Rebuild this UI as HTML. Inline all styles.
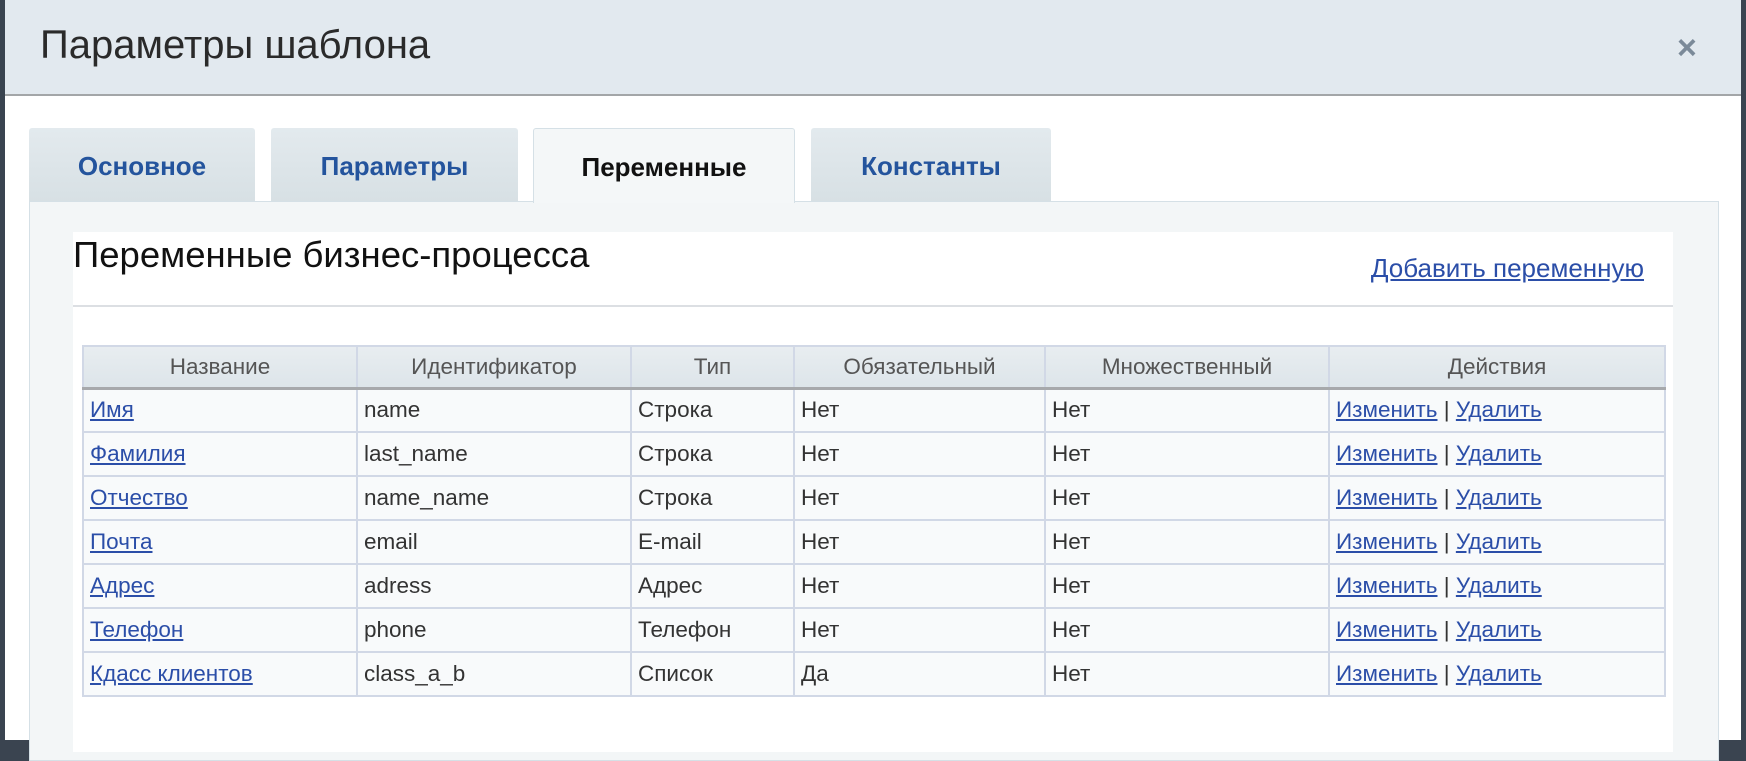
<!DOCTYPE html>
<html><head><meta charset="utf-8"><style>
*{box-sizing:border-box;margin:0;padding:0}
body{width:1746px;height:740px;overflow:hidden;background:#3a4450;font-family:"Liberation Sans",Arial,sans-serif;position:relative}
.dlg{position:absolute;left:5px;top:0;width:1736px;height:740px;background:#fff}
.hdr{position:absolute;left:0;top:0;width:1736px;height:96px;background:#e2e9ef;border-bottom:2px solid #a3a6a8}
.hdr h1{position:absolute;left:35px;top:23px;font-weight:normal;font-size:40px;color:#2a2a2a}
.x{position:absolute;left:1672px;top:29px;font-size:34px;color:#7b8a99;font-weight:bold}
.tab{position:absolute;top:128px;height:74px;background:linear-gradient(#e3eaee,#d7e0e4);border-radius:3px 3px 0 0;font-weight:bold;font-size:26px;color:#24549d;text-align:center;line-height:76px}
.tab.act{background:#f4f7f8;color:#111;border:1px solid #d5e0e6;border-bottom:none;height:75px;z-index:2}
.panel{position:absolute;left:24px;top:201px;width:1690px;height:560px;background:#f3f6f7;border:1px solid #d5e0e6}
.inner{position:absolute;left:68px;top:232px;width:1600px;height:520px;background:#fff}
.inner h2{position:absolute;left:0;top:2px;font-weight:normal;font-size:36.5px;color:#111}
.add{position:absolute;right:29px;top:21px;font-size:26px;color:#2b4ea8;text-decoration:underline}
.sep{position:absolute;left:0;top:73px;width:1600px;height:2px;background:#dcdfe3}
table{position:absolute;left:9px;top:113px;border-collapse:collapse;font-size:22.5px;background:#f8fafb}
th{height:42px;background:linear-gradient(#e8edf0,#dde5ea);font-weight:normal;color:#555;border:2px solid #d1d8e6;border-bottom:3px solid #a7a9ac}
td{height:44px;border:2px solid #d1d8e6;padding:0 6px;color:#333}
td a{color:#2b4ea8;text-decoration:underline}
</style></head><body>
<div class="dlg">
<div class="hdr"><h1>Параметры шаблона</h1><div class="x">×</div></div>
<div class="tab" style="left:24px;width:226px">Основное</div>
<div class="tab" style="left:266px;width:247px">Параметры</div>
<div class="tab act" style="left:528px;width:262px">Переменные</div>
<div class="tab" style="left:806px;width:240px">Константы</div>
<div class="panel"></div>
<div class="inner">
<h2>Переменные бизнес-процесса</h2>
<div class="add">Добавить переменную</div>
<div class="sep"></div>
<table>
<colgroup><col style="width:274px"><col style="width:274px"><col style="width:163px"><col style="width:251px"><col style="width:284px"><col style="width:336px"></colgroup>
<tr><th>Название</th><th>Идентификатор</th><th>Тип</th><th>Обязательный</th><th>Множественный</th><th>Действия</th></tr>
<tr><td><a>Имя</a></td><td>name</td><td>Строка</td><td>Нет</td><td>Нет</td><td><a>Изменить</a> | <a>Удалить</a></td></tr>
<tr><td><a>Фамилия</a></td><td>last_name</td><td>Строка</td><td>Нет</td><td>Нет</td><td><a>Изменить</a> | <a>Удалить</a></td></tr>
<tr><td><a>Отчество</a></td><td>name_name</td><td>Строка</td><td>Нет</td><td>Нет</td><td><a>Изменить</a> | <a>Удалить</a></td></tr>
<tr><td><a>Почта</a></td><td>email</td><td>E-mail</td><td>Нет</td><td>Нет</td><td><a>Изменить</a> | <a>Удалить</a></td></tr>
<tr><td><a>Адрес</a></td><td>adress</td><td>Адрес</td><td>Нет</td><td>Нет</td><td><a>Изменить</a> | <a>Удалить</a></td></tr>
<tr><td><a>Телефон</a></td><td>phone</td><td>Телефон</td><td>Нет</td><td>Нет</td><td><a>Изменить</a> | <a>Удалить</a></td></tr>
<tr><td><a>Кдасс клиентов</a></td><td>class_a_b</td><td>Список</td><td>Да</td><td>Нет</td><td><a>Изменить</a> | <a>Удалить</a></td></tr>
</table>
</div>
</div>
</body></html>
